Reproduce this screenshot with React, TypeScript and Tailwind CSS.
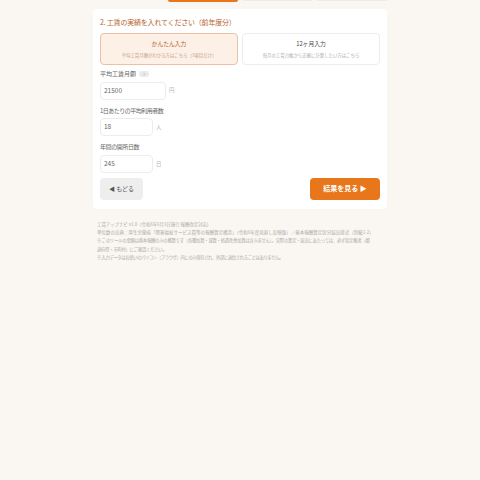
import React from 'react';

const font = { fontFamily: '"Noto Sans CJK JP", "Noto Sans", sans-serif' };

const Field = ({ label, value, unit, width, tracking, badge }: { label: string; value: string; unit: string; width: string; tracking?: string; badge?: boolean }) => (
  <div className="mb-[4.7px]">
    <div className={`flex h-[12px] items-center gap-[3px] text-[6px] text-[#666] ${tracking ?? ''}`}>
      {label}
      {badge && <span className="flex h-[6px] w-[10px] items-center justify-center rounded-full bg-[#eaeaea] text-[4px] text-[#999]">?</span>}
    </div>
    <div className="mt-[2px] flex items-center gap-[3px]">
      <div className={`flex h-[18px] items-center rounded-[4px] border-[1.5px] border-[#ececec] bg-white px-[3px] text-[6.5px] text-[#666] ${width}`}>{value}</div>
      <span className="text-[5.5px] text-[#b5b5b5]">{unit}</span>
    </div>
  </div>
);

export default function App() {
  return (
    <div className="min-h-[480px] bg-[#faf6f1]" style={font}>
      <div className="mx-auto w-[294px]">
        {/* 上のタブ(切れている) */}
        <div className="flex h-[2px] gap-[5px] overflow-hidden pl-[75px]">
          <div className="h-[2px] w-[70px] shrink-0 rounded-b-[2px] bg-[#e8761a]" />
          <div className="h-[1px] w-[69px] shrink-0 bg-[#eeeae6]" />
          <div className="h-[1px] w-[70px] shrink-0 bg-[#eeeae6]" />
        </div>

        {/* カード */}
        <div className="mt-[7px] h-[200px] rounded-[4px] bg-white px-[7px] pt-[8px]">
          <h2 className="h-[11px] text-[7px] leading-[11px] tracking-[-0.2px] text-[#b5622a]">2. 工賃の実績を入れてください（前年度分）</h2>

          <div className="mt-[5px] flex gap-[4px]">
            <div className="flex h-[32px] w-[138px] flex-col items-center justify-center rounded-[4px] border-[1.5px] border-[#ecc0a4] bg-[#fdf0e6]">
              <div className="text-[5.8px] text-[#b5622a]">かんたん入力</div>
              <div className="mt-[3px] text-[4.4px] text-[#c0a08a]">平均工賃月額がわかる方はこちら（3項目だけ）</div>
            </div>
            <div className="flex h-[32px] w-[138px] flex-col items-center justify-center rounded-[4px] border-[1.5px] border-[#ececec] bg-white">
              <div className="text-[5.8px] text-[#444]">12ヶ月入力</div>
              <div className="mt-[3px] text-[4.4px] text-[#aaa]">毎月の工賃台帳から正確に計算したい方はこちら</div>
            </div>
          </div>

          <div className="mt-[2.5px]">
            <Field label="平均工賃月額" value="21500" unit="円" width="w-[66px]" badge />
            <Field label="1日あたりの平均利用者数" value="18" unit="人" width="w-[53px]" tracking="tracking-[-0.5px]" />
            <Field label="年間の開所日数" value="245" unit="日" width="w-[53px]" tracking="tracking-[-0.4px]" />
          </div>

          <div className="mt-[1.5px] flex items-center justify-between">
            <button className="h-[22px] w-[43px] rounded-[4px] bg-[#eeeeee] text-[6px] text-[#555]">◀ もどる</button>
            <button className="h-[22px] w-[70px] rounded-[4px] bg-[#e8761a] text-[7px] font-bold text-white">結果を見る ▶</button>
          </div>
        </div>

        {/* 注記 */}
        <div className="mt-[11px] pr-[15px] pl-[4px] leading-[8.2px] text-[#aaa]">
          <p className="text-[4.4px]">工賃アップナビ v1.0（令和6年6月1日施行 報酬改定対応）</p>
          <p className="text-[4.5px] whitespace-nowrap">単位数の出典：厚生労働省「障害福祉サービス費等の報酬算定構造」（令和6年度見直し反映版）／基本報酬算定区分届出様式（別紙1-2）</p>
          <p className="text-[4.3px] tracking-[-0.2px]">※ このツールの金額は基本報酬のみの概算です（各種加算・減算・処遇改善加算は含みません）。実際の算定・届出にあたっては、必ず指定権者（都道府県・市町村）にご確認ください。</p>
          <p className="text-[4.3px] tracking-[-0.35px]">※ 入力データはお使いのパソコン（ブラウザ）内にのみ保存され、外部に送信されることはありません。</p>
        </div>
      </div>
    </div>
  );
}
